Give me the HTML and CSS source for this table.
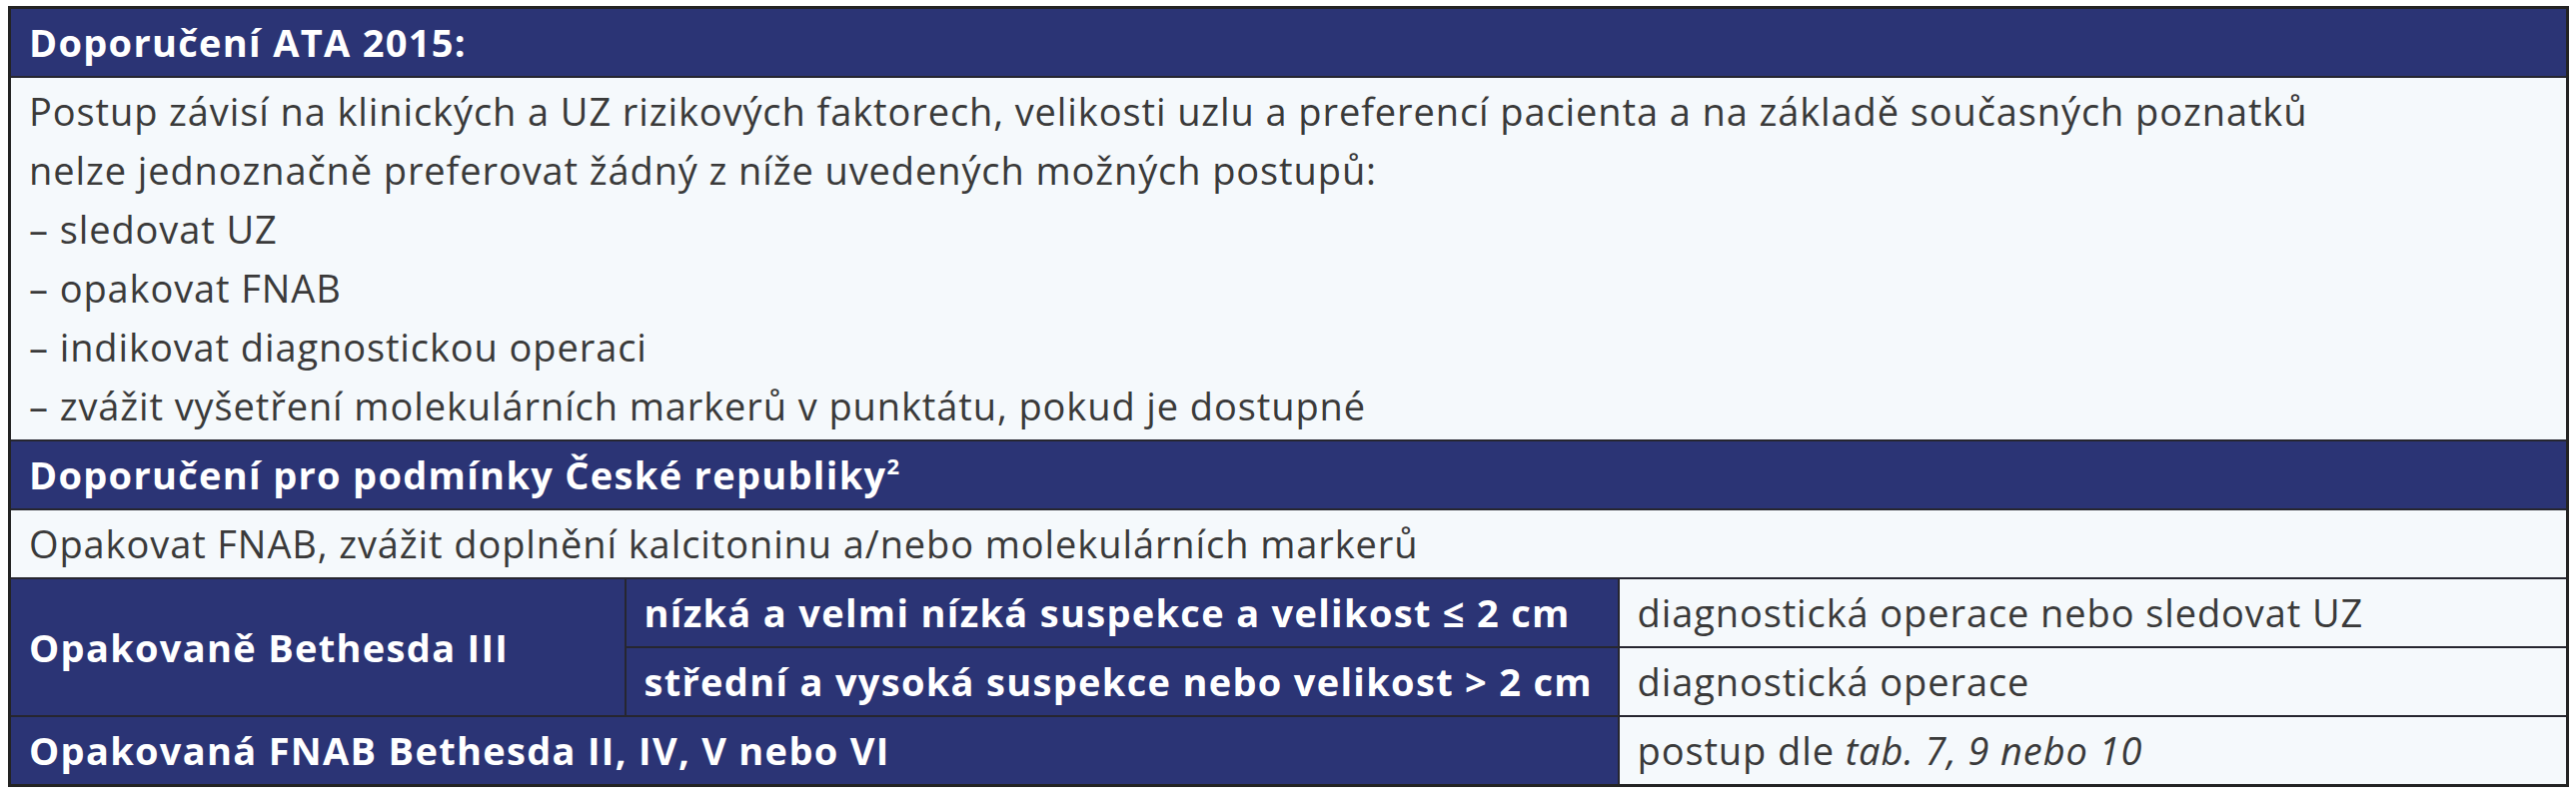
FILE: index.html
```html
<!DOCTYPE html>
<html lang="cs">
<head>
<meta charset="utf-8">
<title>Doporučení ATA 2015</title>
<link rel="stylesheet" href="styles.css">
</head>
<body>
<table class="rec">
  <colgroup>
    <col class="c1">
    <col class="c2">
    <col class="c3">
  </colgroup>
  <tbody>
    <tr>
      <th class="head" colspan="3">Doporučení ATA 2015:</th>
    </tr>
    <tr>
      <td class="body body-list" colspan="3">Postup závisí na klinických a UZ rizikových faktorech, velikosti uzlu a preferencí pacienta a na základě současných poznatků<br>nelze jednoznačně preferovat žádný z níže uvedených možných postupů:<br>– sledovat UZ<br>– opakovat FNAB<br>– indikovat diagnostickou operaci<br>– zvážit vyšetření molekulárních markerů v punktátu, pokud je dostupné</td>
    </tr>
    <tr>
      <th class="head" colspan="3">Doporučení pro podmínky České republiky<sup class="sup">2</sup></th>
    </tr>
    <tr>
      <td class="body" colspan="3">Opakovat FNAB, zvážit doplnění kalcitoninu a/nebo molekulárních markerů</td>
    </tr>
    <tr>
      <th class="head" rowspan="2">Opakovaně Bethesda III</th>
      <th class="head">nízká a velmi nízká suspekce a velikost ≤ 2 cm</th>
      <td class="body">diagnostická operace nebo sledovat UZ</td>
    </tr>
    <tr>
      <th class="head">střední a vysoká suspekce nebo velikost &gt; 2 cm</th>
      <td class="body">diagnostická operace</td>
    </tr>
    <tr>
      <th class="head" colspan="2">Opakovaná FNAB Bethesda II, IV, V nebo VI</th>
      <td class="body">postup dle <i>tab. 7, 9 nebo 10</i></td>
    </tr>
  </tbody>
</table>
</body>
</html>
```
FILE: styles.css
```css
html, body {
  margin: 0;
  padding: 0;
  background: #ffffff;
}

body {
  padding: 6px 0 0 8px;
  font-family: "Open Sans", "DejaVu Sans", sans-serif;
}

.rec {
  width: 2560px;
  table-layout: fixed;
  border-collapse: collapse;
  border: 3px solid #232323;
}

.c1 { width: 616px; }
.c2 { width: 994px; }
.c3 { width: 950px; }

.rec th,
.rec td {
  border: 2px solid #262630;
  padding: 4px 18px;
  font-size: 38px;
  line-height: 59px;
  text-align: left;
  vertical-align: middle;
}

.head {
  background: #2b3475;
  color: #ffffff;
  font-weight: 700;
  letter-spacing: 1.3px;
}

.body {
  background: #f5f9fc;
  color: #3a3a3a;
  font-weight: 400;
  letter-spacing: 0.9px;
}

.body-list {
  line-height: 57.5px;
  padding-top: 8px;
  padding-bottom: 11px;
}

.sup {
  font-size: 22px;
  line-height: 0;
  vertical-align: 15px;
}
```
